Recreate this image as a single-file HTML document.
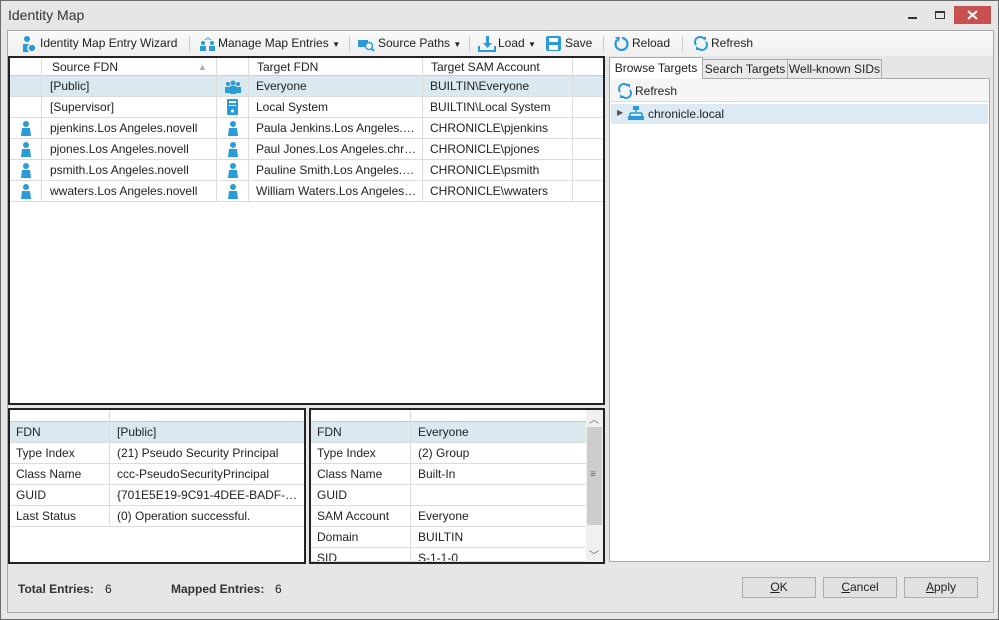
<!DOCTYPE html>
<html><head><meta charset="utf-8"><style>
*{box-sizing:border-box;margin:0;padding:0}
body{width:999px;height:620px;overflow:hidden;background:#e6e6e6;font-family:"Liberation Sans",sans-serif;font-size:12px;color:#222;position:relative}
.a{position:absolute}
.win{left:0;top:0;width:999px;height:620px;border:1px solid #6b6b6b}
.t{white-space:nowrap;overflow:hidden}
.row{position:absolute;height:21px;border-bottom:1px solid #dcdcdc;background:#fff}
.cell{position:absolute;top:0;height:21px;line-height:21px;border-right:1px solid #dcdcdc;padding-left:6px;padding-right:4px;white-space:nowrap;overflow:hidden;text-overflow:ellipsis}
.sel{background:#dae9f0}
.btn{position:absolute;top:577px;width:74px;height:21px;border:1px solid #adadad;background:#e1e1e1;text-align:center;line-height:19px}
.tab{position:absolute;height:20px;border:1px solid #aaa;background:#e9e9e9;line-height:18px;padding:0;text-align:center;white-space:nowrap;overflow:hidden}
.sep{position:absolute;top:36px;width:1px;height:16px;background:#ccc}
</style></head><body>
<div class="a win"></div>
<div class="a" style="left:8px;top:7px;font-size:14px;color:#333">Identity Map</div>
<div class="a" style="left:908px;top:17px;width:9px;height:2px;background:#333"></div>
<div class="a" style="left:935px;top:11px;width:10px;height:8px;border:1px solid #333;border-top-width:2px"></div>
<div class="a" style="left:954px;top:6px;width:37px;height:18px;background:#c75050"></div>
<svg class="a" style="left:967px;top:10px" width="11" height="10"><path d="M1 1l9 8M10 1l-9 8" stroke="#fff" stroke-width="2"/></svg>

<div class="a" style="left:7px;top:30px;width:987px;height:583px;border:1px solid #a8a8a8"></div>
<div class="a" style="left:8px;top:31px;width:985px;height:25px;background:linear-gradient(#fafafa,#efefef)"></div>
<!-- toolbar -->
<svg class="a" style="left:20px;top:35px" width="18" height="18"><circle cx="7" cy="4" r="3" fill="#2a9ad8"/><path d="M3 9h8v8H3z" fill="#2a9ad8"/><circle cx="12" cy="13" r="4" fill="#2a9ad8" stroke="#fff" stroke-width="1.5"/></svg>
<div class="a t" style="left:40px;top:36px">Identity Map Entry Wizard</div>
<div class="sep" style="left:189px"></div>
<svg class="a" style="left:199px;top:37px" width="18" height="14"><circle cx="4" cy="6" r="2" fill="#2a9ad8"/><path d="M1 9h6v5H1z" fill="#2a9ad8"/><circle cx="13" cy="6" r="2" fill="#2a9ad8"/><path d="M10 9h6v5h-6z" fill="#2a9ad8"/><path d="M6 3l3-2 3 2" stroke="#2a9ad8" fill="none"/></svg>
<div class="a t" style="left:218px;top:36px">Manage Map Entries <span style="font-size:8px">▼</span></div>
<div class="sep" style="left:349px"></div>
<svg class="a" style="left:358px;top:38px" width="18" height="14"><path d="M0 2h10v7H0z" fill="#2a9ad8"/><circle cx="11" cy="8" r="3.5" fill="#fff" stroke="#2a9ad8" stroke-width="1.5"/><path d="M13 10l3 3" stroke="#2a9ad8" stroke-width="2"/></svg>
<div class="a t" style="left:378px;top:36px">Source Paths <span style="font-size:8px">▼</span></div>
<div class="sep" style="left:469px"></div>
<svg class="a" style="left:478px;top:35px" width="18" height="18"><path d="M8 1h3v7h3l-4.5 5L5 8h3z" fill="#2a9ad8"/><path d="M1 11v5h16v-5" stroke="#2a9ad8" stroke-width="2" fill="none"/></svg>
<div class="a t" style="left:498px;top:36px">Load <span style="font-size:8px">▼</span></div>
<svg class="a" style="left:545px;top:35px" width="17" height="17"><rect x="1" y="1" width="15" height="15" rx="2" fill="#2a9ad8"/><rect x="4" y="3" width="9" height="4" fill="#fff"/><rect x="4" y="10" width="9" height="5" fill="#fff"/></svg>
<div class="a t" style="left:565px;top:36px">Save</div>
<div class="sep" style="left:603px"></div>
<svg class="a" style="left:613px;top:35px" width="16" height="17"><path d="M4 5a6 6 0 1 0 5-2" stroke="#2a9ad8" stroke-width="2.2" fill="none"/><path d="M2 2l5 0 -1 5z" fill="#2a9ad8"/></svg>
<div class="a t" style="left:632px;top:36px">Reload</div>
<div class="sep" style="left:682px"></div>
<svg class="a" style="left:693px;top:35px" width="16" height="17"><path d="M3 10a5 5 0 0 1 8-6" stroke="#2a9ad8" stroke-width="2" fill="none"/><path d="M13 7a5 5 0 0 1-8 6" stroke="#2a9ad8" stroke-width="2" fill="none"/><path d="M9 2l4 0 0 4z M7 15l-4 0 0-4z" fill="#2a9ad8"/></svg>
<div class="a t" style="left:711px;top:36px">Refresh</div>

<!-- main grid -->
<div class="a" style="left:8px;top:56px;width:597px;height:349px;border:2px solid #222;background:#fff"></div>
<div class="row" style="left:10px;top:58px;width:593px;height:18px;border-bottom:1px solid #ccc">
<div class="cell" style="left:0;width:32px;height:18px"></div>
<div class="cell" style="left:32px;width:175px;height:18px;line-height:18px;padding-left:10px">Source FDN<span style="position:absolute;left:156px;color:#aaa;font-size:9px">▲</span></div>
<div class="cell" style="left:207px;width:32px;height:18px"></div>
<div class="cell" style="left:239px;width:174px;height:18px;line-height:18px;padding-left:8px">Target FDN</div>
<div class="cell" style="left:413px;width:150px;height:18px;line-height:18px;padding-left:8px">Target SAM Account</div>
</div>
<div id="rows"></div>

<!-- bottom left props -->
<div class="a" style="left:8px;top:408px;width:298px;height:156px;border:2px solid #222;background:#fff"></div>
<div class="row" style="left:10px;top:410px;width:294px;height:12px;border-bottom:1px solid #ccc"><div class="cell" style="left:0;width:100px;height:12px"></div></div>
<div id="pl"></div>
<!-- bottom right props -->
<div class="a" style="left:309px;top:408px;width:296px;height:156px;border:2px solid #222;background:#fff"></div>
<div class="row" style="left:311px;top:410px;width:275px;height:12px;border-bottom:1px solid #ccc"><div class="cell" style="left:0;width:100px;height:12px"></div></div>
<div id="pr"></div>
<div class="a" style="left:586px;top:410px;width:17px;height:152px;background:#f0f0f0"></div>
<div class="a" style="left:587px;top:427px;width:15px;height:98px;background:#cdcdcd"></div>
<div class="a" style="left:589px;top:411px;font-size:10px;color:#666">︿</div>
<div class="a" style="left:590px;top:469px;font-size:10px;color:#666">≡</div>
<div class="a" style="left:589px;top:547px;font-size:10px;color:#666">﹀</div>

<!-- right panel -->
<div class="a" style="left:609px;top:78px;width:381px;height:484px;border:1px solid #aaa;background:#fff"></div>
<div class="a" style="left:610px;top:79px;width:379px;height:23px;background:#f5f5f5;border-bottom:1px solid #ddd"></div>
<div class="tab" style="left:702px;top:59px;width:86px">Search Targets</div>
<div class="tab" style="left:787px;top:59px;width:95px">Well-known SIDs</div>
<div class="tab" style="left:609px;top:57px;width:94px;height:22px;background:#fff;border-bottom:none;line-height:20px">Browse Targets</div>
<svg class="a" style="left:617px;top:83px" width="16" height="16"><path d="M3 9a5 5 0 0 1 8-6" stroke="#2a9ad8" stroke-width="2" fill="none"/><path d="M13 7a5 5 0 0 1-8 6" stroke="#2a9ad8" stroke-width="2" fill="none"/><path d="M9 1l4 0 0 4z M7 15l-4 0 0-4z" fill="#2a9ad8"/></svg>
<div class="a" style="left:635px;top:84px">Refresh</div>
<div class="a" style="left:611px;top:104px;width:377px;height:20px;background:#dde9f3"></div>
<div class="a" style="left:617px;top:108px;font-size:8px;color:#555">▶</div>
<svg class="a" style="left:628px;top:106px" width="16" height="15"><rect x="5" y="0" width="6" height="4" fill="#2a9ad8"/><path d="M8 4v3M2 7h12M2 7v3M14 7v3" stroke="#2a9ad8" stroke-width="1.5"/><rect x="0" y="10" width="5" height="4" fill="#2a9ad8"/><rect x="11" y="10" width="5" height="4" fill="#2a9ad8"/><rect x="5" y="10" width="6" height="4" fill="#2a9ad8"/></svg>
<div class="a" style="left:648px;top:107px">chronicle.local</div>

<!-- status -->
<div class="a" style="left:18px;top:582px;font-weight:bold;color:#333">Total Entries:</div>
<div class="a" style="left:105px;top:582px">6</div>
<div class="a" style="left:171px;top:582px;font-weight:bold;color:#333">Mapped Entries:</div>
<div class="a" style="left:275px;top:582px">6</div>
<div class="btn" style="left:742px"><u>O</u>K</div>
<div class="btn" style="left:823px"><u>C</u>ancel</div>
<div class="btn" style="left:904px"><u>A</u>pply</div>

<script>
var person='<svg width="10" height="16" style="position:absolute;left:11px;top:3px"><circle cx="5" cy="3" r="3" fill="#2a9ad8"/><path d="M1 7h8l1 8H0z" fill="#2a9ad8"/></svg>';
var grp='<svg width="18" height="14" style="position:absolute;left:7px;top:4px"><circle cx="4" cy="4" r="2" fill="#2a9ad8"/><circle cx="9" cy="3" r="2.5" fill="#2a9ad8"/><circle cx="14" cy="4" r="2" fill="#2a9ad8"/><path d="M1 7h6v6H1zM6 6h6v8H6zM11 7h6v6h-6z" fill="#2a9ad8"/></svg>';
var comp='<svg width="12" height="16" style="position:absolute;left:10px;top:2px"><rect x="0" y="0" width="11" height="16" rx="1" fill="#2a9ad8"/><rect x="2" y="2" width="7" height="2" fill="#fff"/><rect x="2" y="6" width="7" height="1" fill="#fff"/><circle cx="5.5" cy="12" r="1.5" fill="#fff"/></svg>';
var R=[['','[Public]',grp,'Everyone','BUILTIN\\Everyone',1],['','[Supervisor]',comp,'Local System','BUILTIN\\Local System'],
[person,'pjenkins.Los Angeles.novell',person,'Paula Jenkins.Los Angeles.chronicle','CHRONICLE\\pjenkins'],
[person,'pjones.Los Angeles.novell',person,'Paul Jones.Los Angeles.chronicle','CHRONICLE\\pjones'],
[person,'psmith.Los Angeles.novell',person,'Pauline Smith.Los Angeles.chronicle','CHRONICLE\\psmith'],
[person,'wwaters.Los Angeles.novell',person,'William Waters.Los Angeles.chronicle','CHRONICLE\\wwaters']];
var h='';R.forEach(function(r,i){h+='<div class="row'+(r[5]?' sel':'')+'" style="left:10px;top:'+(76+i*21)+'px;width:593px">'+
'<div class="cell" style="left:0;width:32px;padding:0">'+r[0]+'</div>'+
'<div class="cell" style="left:32px;width:175px;padding-left:8px">'+r[1]+'</div>'+
'<div class="cell" style="left:207px;width:32px;padding:0">'+r[2]+'</div>'+
'<div class="cell" style="left:239px;width:174px;padding-left:7px">'+r[3]+'</div>'+
'<div class="cell" style="left:413px;width:150px;padding-left:7px">'+r[4]+'</div></div>';});
document.getElementById('rows').innerHTML=h;
function props(el,L,w,data){var s='';data.forEach(function(r,i){var t=422+i*21;if(t>=562)return;var hh=Math.min(21,562-t);
s+='<div class="row'+(i==0?' sel':'')+'" style="left:'+L+'px;top:'+t+'px;width:'+w+'px;height:'+hh+'px;overflow:hidden"><div class="cell" style="left:0;width:100px">'+r[0]+'</div><div class="cell" style="left:100px;width:'+(w-100)+'px;border-right:none;padding-left:7px">'+r[1]+'</div></div>';});
document.getElementById(el).innerHTML=s;}
props('pl',10,294,[['FDN','[Public]'],['Type Index','(21) Pseudo Security Principal'],['Class Name','ccc-PseudoSecurityPrincipal'],['GUID','{701E5E19-9C91-4DEE-BADF-93A1234567}'],['Last Status','(0) Operation successful.']]);
props('pr',311,275,[['FDN','Everyone'],['Type Index','(2) Group'],['Class Name','Built-In'],['GUID',''],['SAM Account','Everyone'],['Domain','BUILTIN'],['SID','S-1-1-0']]);
</script>
</body></html>
